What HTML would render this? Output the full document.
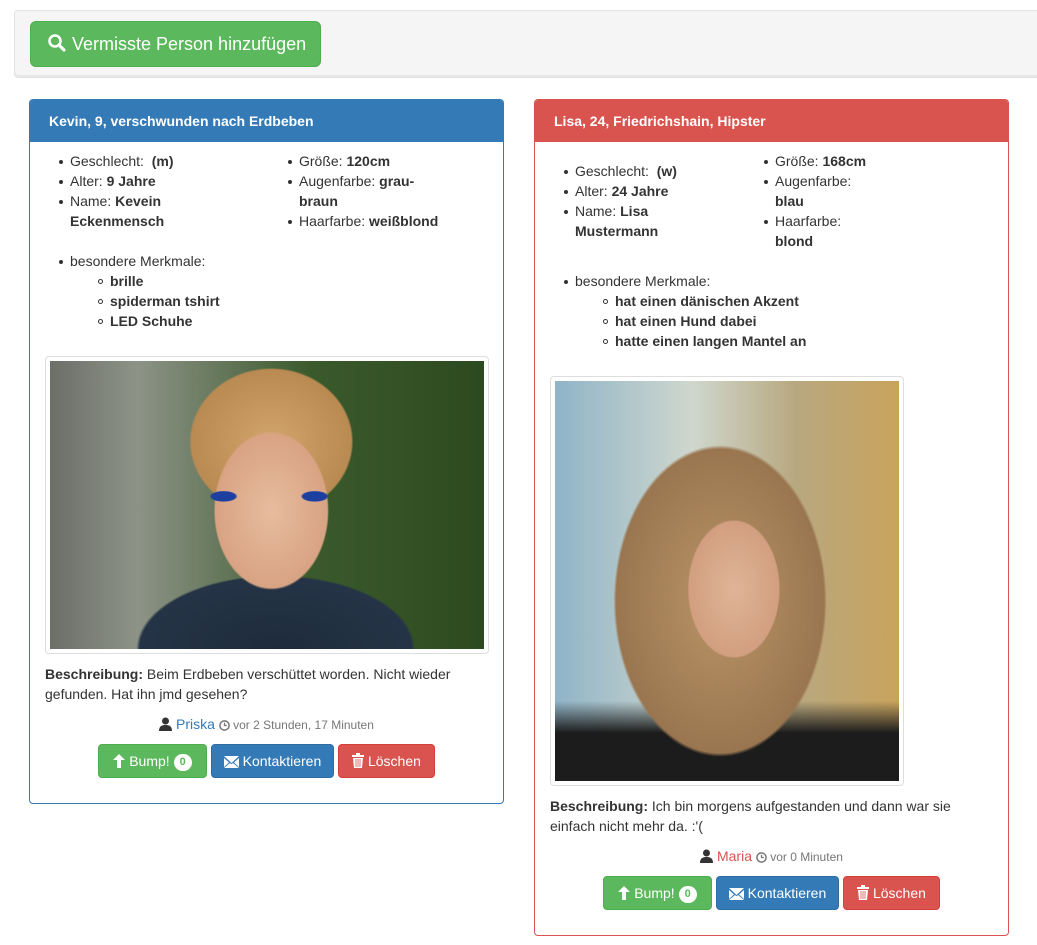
<!DOCTYPE html>
<html><head><meta charset="utf-8"><style>
*{box-sizing:border-box}
body{margin:0;width:1037px;height:945px;background:#fff;font-family:"Liberation Sans",sans-serif;font-size:14px;color:#333;position:relative;overflow:hidden}
.abs{position:absolute}
.well{left:14px;top:10px;width:1030px;height:68px;background:#f5f5f5;border:1px solid #e3e3e3;border-radius:4px;box-shadow:inset 0 -2px 1px rgba(0,0,0,.06)}
.addbtn{left:30px;top:21px;width:291px;height:46px;background:#5cb85c;border:1px solid #4cae4c;border-radius:6px;color:#fff;font-size:18px;line-height:44px;padding-left:16px}
.panel{border-radius:4px;border:1px solid}
.ph{position:absolute;left:0;right:0;top:0;height:42px;color:#fff;font-weight:bold;font-size:14px;line-height:42px;padding-left:19px;border-radius:3px 3px 0 0}
ul{margin:0;padding:0;list-style:none}
li{position:relative;line-height:20px}
li.b:before{content:"";position:absolute;left:-11px;top:9px;width:4px;height:4px;border-radius:50%;background:#333}
li.c:before{content:"";position:absolute;left:-12px;top:8px;width:5px;height:5px;border-radius:50%;border:1px solid #333;box-sizing:border-box}
b{font-weight:bold}
.thumb{border:1px solid #ddd;border-radius:4px;padding:4px;background:#fff}
.btn{position:absolute;height:34px;border-radius:4px;color:#fff;line-height:32px;text-align:center;font-size:14px;border:1px solid}
.g{background:#5cb85c;border-color:#4cae4c}.bl{background:#337ab7;border-color:#2e6da4}.r{background:#d9534f;border-color:#d43f3a}
.badge{display:inline-block;background:#fff;color:#5cb85c;border-radius:10px;font-size:11px;font-weight:bold;padding:0 6px;line-height:17px;vertical-align:1px}
.meta{font-size:12px;color:#777}
svg{vertical-align:-2px}
</style></head><body>
<div class="abs well"></div>
<div class="abs addbtn"><svg width="20" height="20" viewBox="0 0 20 20" style="vertical-align:-3px"><circle cx="8" cy="8" r="5.5" fill="none" stroke="#fff" stroke-width="2.6"/><path d="M12 12l5 5" stroke="#fff" stroke-width="3.2" stroke-linecap="round"/></svg> Vermisste Person hinzufügen</div>

<div class="abs panel" style="left:29px;top:99px;width:475px;height:705px;border-color:#337ab7">
<div class="ph" style="background:#337ab7">Kevin, 9, verschwunden nach Erdbeben</div>
</div>
<ul class="abs" style="left:70px;top:151px;width:200px">
<li class="b">Geschlecht: &nbsp;<b>(m)</b></li>
<li class="b">Alter: <b>9 Jahre</b></li>
<li class="b">Name: <b>Kevein<br>Eckenmensch</b></li>
</ul>
<ul class="abs" style="left:299px;top:151px;width:140px">
<li class="b">Größe: <b>120cm</b></li>
<li class="b">Augenfarbe: <b>grau-<br>braun</b></li>
<li class="b">Haarfarbe: <b>weißblond</b></li>
</ul>
<ul class="abs" style="left:70px;top:251px">
<li class="b">besondere Merkmale:</li>
</ul>
<ul class="abs" style="left:110px;top:271px">
<li class="c"><b>brille</b></li><li class="c"><b>spiderman tshirt</b></li><li class="c"><b>LED Schuhe</b></li>
</ul>
<div class="abs thumb" style="left:45px;top:356px;width:444px;height:298px">
<div style="width:100%;height:100%;background:radial-gradient(ellipse 20px 8px at 40% 47%,#1d3fa0 0,#1d3fa0 60%,transparent 70%),radial-gradient(ellipse 20px 8px at 61% 47%,#1d3fa0 0,#1d3fa0 60%,transparent 70%),radial-gradient(ellipse 80px 110px at 51% 52%,#e7bc9e 0,#d8a383 70%,transparent 72%),radial-gradient(ellipse 100px 90px at 51% 28%,#d2a56c 0,#b98a52 80%,transparent 82%),radial-gradient(ellipse 170px 90px at 52% 100%,#1e2b3c 0,#243446 80%,transparent 82%),linear-gradient(90deg,#6c6e68 0,#8d9387 20%,#3b5a2c 60%,#2c4a1f 100%)"></div>
</div>
<div class="abs" style="left:45px;top:664px;width:440px;line-height:20px"><b>Beschreibung:</b> Beim Erdbeben verschüttet worden. Nicht wieder gefunden. Hat ihn jmd gesehen?</div>
<div class="abs" style="left:29px;width:475px;top:714px;text-align:center;line-height:20px"><svg width="13" height="14" viewBox="0 0 13 14"><circle cx="6.5" cy="4" r="3.5" fill="#333"/><path d="M0 14c0-5 3-6 6.5-6s6.5 1 6.5 6z" fill="#333"/></svg> <span style="color:#337ab7">Priska</span> <span class="meta"><svg width="11" height="11" viewBox="0 0 12 12"><circle cx="6" cy="6" r="5" fill="none" stroke="#777" stroke-width="1.6"/><path d="M6 3v3h2.5" fill="none" stroke="#777" stroke-width="1.4"/></svg> vor 2 Stunden, 17 Minuten</span></div>
<div class="btn g" style="left:98px;top:744px;width:109px"><svg width="12" height="14" viewBox="0 0 12 14"><path d="M6 0L0 6h4v8h4V6h4z" fill="#fff"/></svg> Bump! <span class="badge">0</span></div>
<div class="btn bl" style="left:211px;top:744px;width:123px"><svg width="15" height="12" viewBox="0 0 15 12"><path d="M0 0h15L7.5 7z" fill="#fff"/><path d="M0 2l5 4.5L0 11zM15 2l-5 4.5 5 4.5zM0 12l6-5 1.5 1.3L9 7l6 5z" fill="#fff"/></svg> Kontaktieren</div>
<div class="btn r" style="left:338px;top:744px;width:97px"><svg width="12" height="15" viewBox="0 0 12 15"><path d="M0 2h12v2H0zM4 0h4v2H4zM1 5h10l-1 10H2z" fill="#fff"/><path d="M4 6v8M6 6v8M8 6v8" stroke="#d9534f" stroke-width="0.8"/></svg> Löschen</div>

<div class="abs panel" style="left:534px;top:99px;width:475px;height:837px;border-color:#d9534f">
<div class="ph" style="background:#d9534f">Lisa, 24, Friedrichshain, Hipster</div>
</div>
<ul class="abs" style="left:575px;top:161px;width:120px">
<li class="b">Geschlecht: &nbsp;<b>(w)</b></li>
<li class="b">Alter: <b>24 Jahre</b></li>
<li class="b">Name: <b>Lisa<br>Mustermann</b></li>
</ul>
<ul class="abs" style="left:775px;top:151px;width:100px">
<li class="b">Größe: <b>168cm</b></li>
<li class="b">Augenfarbe:<br><b>blau</b></li>
<li class="b">Haarfarbe:<br><b>blond</b></li>
</ul>
<ul class="abs" style="left:575px;top:271px"><li class="b">besondere Merkmale:</li></ul>
<ul class="abs" style="left:615px;top:291px">
<li class="c"><b>hat einen dänischen Akzent</b></li><li class="c"><b>hat einen Hund dabei</b></li><li class="c"><b>hatte einen langen Mantel an</b></li>
</ul>
<div class="abs thumb" style="left:550px;top:376px;width:354px;height:410px">
<div style="width:100%;height:100%;background:radial-gradient(ellipse 60px 90px at 52% 52%,#e0b497 0,#d29f80 75%,transparent 77%),radial-gradient(ellipse 130px 190px at 48% 55%,#b99467 0,#9a7650 80%,transparent 82%),linear-gradient(180deg,transparent 80%,#1c1c1c 88%),linear-gradient(90deg,#8fb4c8 0,#cfd7cd 40%,#b8a880 70%,#c9a35b 100%)"></div>
</div>
<div class="abs" style="left:550px;top:796px;width:420px;line-height:20px"><b>Beschreibung:</b> Ich bin morgens aufgestanden und dann war sie einfach nicht mehr da. :'(</div>
<div class="abs" style="left:534px;width:475px;top:846px;text-align:center;line-height:20px"><svg width="13" height="14" viewBox="0 0 13 14"><circle cx="6.5" cy="4" r="3.5" fill="#333"/><path d="M0 14c0-5 3-6 6.5-6s6.5 1 6.5 6z" fill="#333"/></svg> <span style="color:#d9534f">Maria</span> <span class="meta"><svg width="11" height="11" viewBox="0 0 12 12"><circle cx="6" cy="6" r="5" fill="none" stroke="#777" stroke-width="1.6"/><path d="M6 3v3h2.5" fill="none" stroke="#777" stroke-width="1.4"/></svg> vor 0 Minuten</span></div>
<div class="btn g" style="left:603px;top:876px;width:109px"><svg width="12" height="14" viewBox="0 0 12 14"><path d="M6 0L0 6h4v8h4V6h4z" fill="#fff"/></svg> Bump! <span class="badge">0</span></div>
<div class="btn bl" style="left:716px;top:876px;width:123px"><svg width="15" height="12" viewBox="0 0 15 12"><path d="M0 0h15L7.5 7z" fill="#fff"/><path d="M0 2l5 4.5L0 11zM15 2l-5 4.5 5 4.5zM0 12l6-5 1.5 1.3L9 7l6 5z" fill="#fff"/></svg> Kontaktieren</div>
<div class="btn r" style="left:843px;top:876px;width:97px"><svg width="12" height="15" viewBox="0 0 12 15"><path d="M0 2h12v2H0zM4 0h4v2H4zM1 5h10l-1 10H2z" fill="#fff"/><path d="M4 6v8M6 6v8M8 6v8" stroke="#d9534f" stroke-width="0.8"/></svg> Löschen</div>
</body></html>
